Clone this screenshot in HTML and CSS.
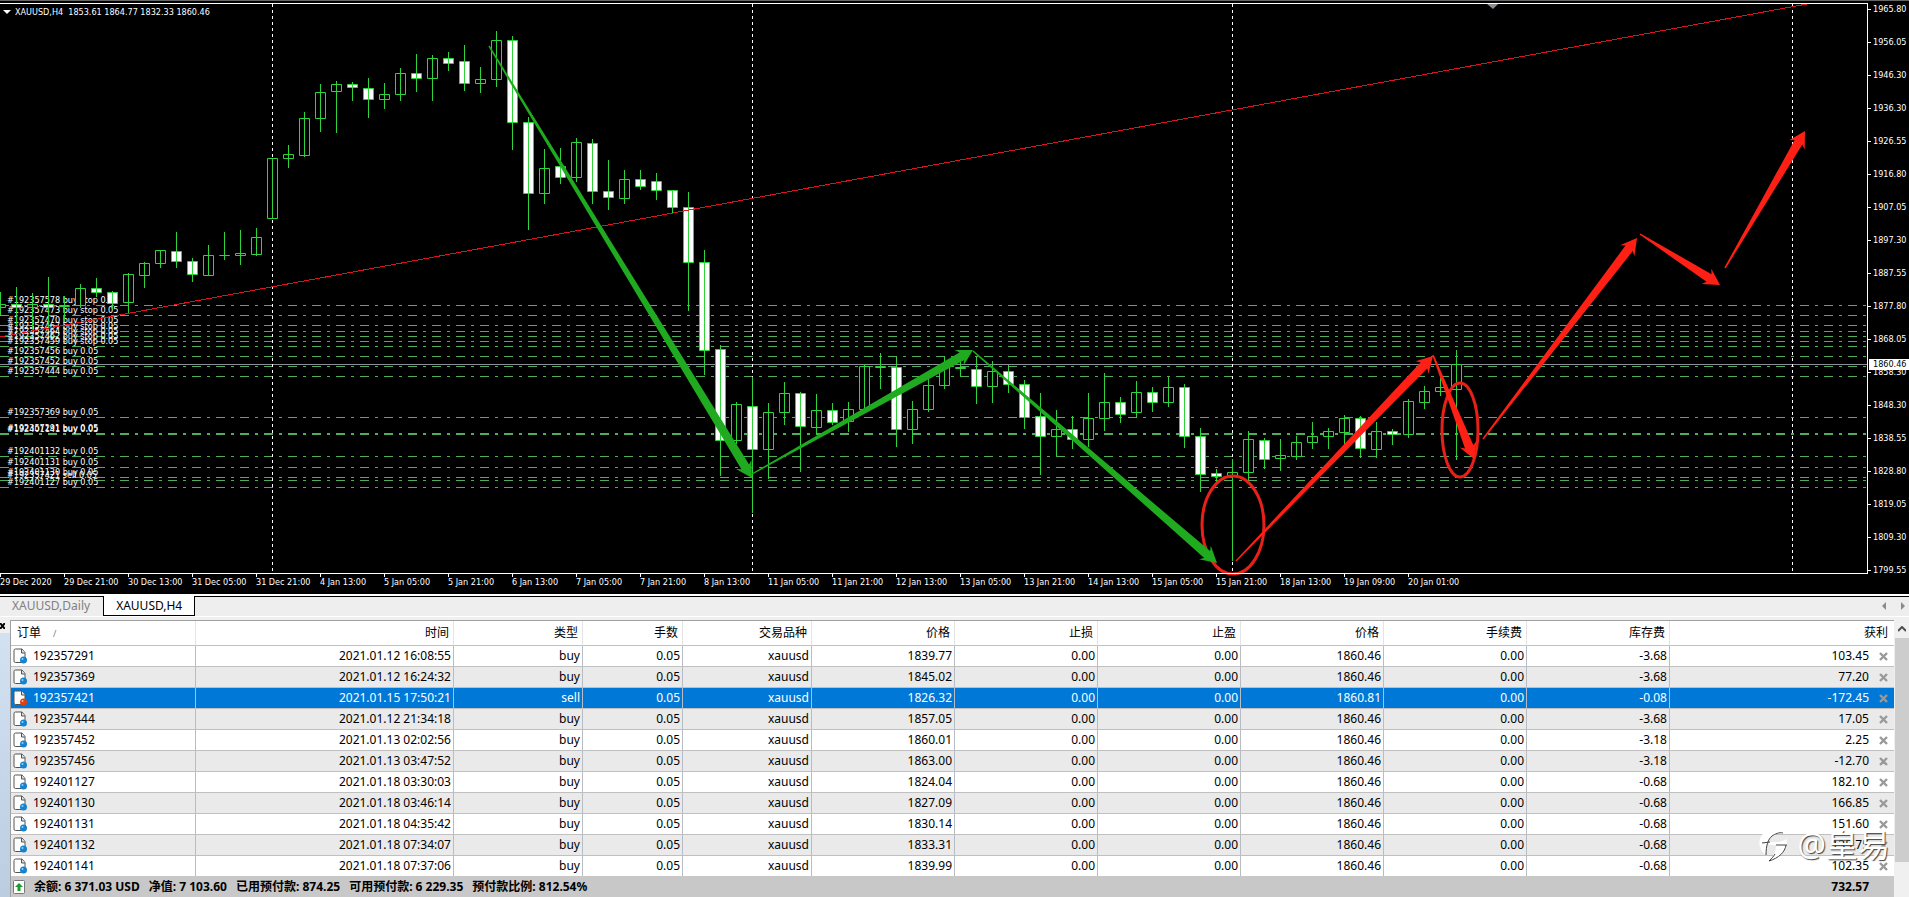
FILE: index.html
```html
<!DOCTYPE html>
<html lang="zh-CN">
<head>
    <meta charset="utf-8">
    <meta name="viewport" content="width=device-width, initial-scale=1">
    <link rel="stylesheet" href="styles.css">
    <title>XAUUSD,H4</title>
</head>
<body>

<svg class="sprite" aria-hidden="true">
    <symbol id="icoOrder" viewBox="0 0 14 16">
        <path d="M1 2.500Q1 1 2.500 1H9L12 4.500V14.500H2.500Q1 14.500 1 13Z" fill="#fff" stroke="#555"/>
        <path d="M8.500 1V5H12" fill="#ddd" stroke="#555"/>
        <circle cx="10.500" cy="12" r="3.500" fill="currentColor"/>
        <circle cx="9.500" cy="11" r="1" fill="#fff" fill-opacity=".6"/>
    </symbol>
    <symbol id="icoClose" viewBox="0 0 9 9">
        <path d="M1 1L8 8M8 1L1 8" stroke="currentColor" stroke-width="2.400"/>
    </symbol>
</svg>

<main class="chart">
    <svg class="plot" id="plot" role="img" aria-label="XAUUSD H4"></svg>
    <div class="prices">
        <ul id="prices"></ul>
        <span class="price-low">1858.30</span>
        <span class="price-now">1860.46</span>
    </div>
    <ul class="dates" id="dates"></ul>
</main>

<nav class="tabs">
    <button class="tab">XAUUSD,Daily</button>
    <button class="tab active">XAUUSD,H4</button>
    <div class="tab-scroll">
        <button aria-label="prev"><svg width="5" height="8"><path d="M4 0V8L0 4Z"/></svg></button>
        <button aria-label="next"><svg width="5" height="8"><path d="M0 0V8L4 4Z"/></svg></button>
    </div>
</nav>

<section class="terminal">
    <aside class="side">
        <button aria-label="close"><svg width="5" height="6"><path d="M0 0L5 6M5 0L0 6"/></svg></button>
    </aside>
    <div class="orders">
        <table>
            <colgroup>
                <col class="c-order"><col class="c-time"><col class="c-type"><col class="c-lots"><col class="c-symbol">
                <col class="c-num"><col class="c-num"><col class="c-num"><col class="c-num"><col class="c-num"><col class="c-num">
                <col>
            </colgroup>
            <thead>
            <tr>
                <th>订单<span class="sort">/</span></th>
                <th>时间</th>
                <th>类型</th>
                <th>手数</th>
                <th>交易品种</th>
                <th>价格</th>
                <th>止损</th>
                <th>止盈</th>
                <th>价格</th>
                <th>手续费</th>
                <th>库存费</th>
                <th>获利</th>
            </tr>
            </thead>
            <tbody id="rows"></tbody>
        </table>
        <footer class="summary">
            <svg width="12" height="14"><rect x=".5" y=".5" width="11" height="13" rx="1" fill="#fff" stroke="#777"/><path d="M6 3L10 7H7.500V11H4.500V7H2Z" fill="#1f9a2f"/></svg>
            <span>余额: 6 371.03 USD</span>
            <span>净值: 7 103.60</span>
            <span>已用预付款: 874.25</span>
            <span>可用预付款: 6 229.35</span>
            <span>预付款比例: 812.54%</span>
            <span class="total">732.57</span>
        </footer>
        <div class="mark">
            <svg width="32" height="34" viewBox="0 0 32 34">
                <path d="M20 1C8 0 0 9 3 19C4 23 6 25 9 27C9 20 10 13 14 9C17 6 21 5 26 5Z" fill="#fff"/>
                <path d="M30 11C31 22 24 29 12 33C17 28 19 24 19 17H12V14H20C23 14 26 13 30 11Z" fill="#fff"/>
                <path d="M5 15L13 14M9 27C9 18 11 11 15 8C18 6 22 4 26 5M19 17H30M29 17C28 24 22 30 12 33C15 30 17 28 18 26" fill="none" stroke="#444" stroke-width="1"/>
            </svg>
            <span>@皇易</span>
        </div>
    </div>
    <div class="scroll">
        <button aria-label="up"><svg width="8" height="6"><path d="M0 5L4 1L8 5"/></svg></button>
        <div class="thumb"></div>
    </div>
</section>

<script src="script.js"></script>
</body>
</html>
```
FILE: styles.css
```css
html, body { height: 100%; margin: 0; padding: 0; }
body { display: flex; flex-direction: column; overflow: hidden; background: #f0f0f0; color: #000; font: 12px/20px "Noto Sans", "Noto Sans CJK SC", sans-serif; }
ul { list-style: none; margin: 0; padding: 0; }
button { border: 0; padding: 0; background: none; font: inherit; color: inherit; }
svg { display: block; }
.sprite { position: absolute; width: 0; height: 0; }

/* Chart */
.chart { display: grid; grid-template-columns: 1fr 42px; grid-template-rows: 573px 21px; flex: none; background: #000 linear-gradient(#666, #666) no-repeat 0 0 / 100% 1px; color: #fff; font: 9px/11px "DejaVu Sans Condensed", "DejaVu Sans", sans-serif; }
.plot { width: 100%; height: 573px; overflow: visible; }
.plot text { fill: #fff; white-space: pre; }
.level { stroke: #4fae5a; stroke-dasharray: 9 6 3 6; }
.bid { stroke: #8c8c9c; }
.separator { stroke: #fff; stroke-dasharray: 3 3; }
.frame { stroke: #fff; }
.candle { stroke: #2fd43a; fill: #000; }
.candle.down { fill: #fff; }
.trend { stroke: #dc1420; shape-rendering: crispEdges; }
.arrow-green { fill: #1faa1f; }
.arrow-red { fill: #ff2015; }
.ring { fill: none; stroke: #e8201a; stroke-width: 3; }
.shift { fill: #8c8c94; }
.marker { fill: #fff; }

.prices { position: relative; margin: 3px 0 -1px; border-left: 1px solid #fff; }
.prices ul { display: flex; flex-direction: column; gap: 22px; padding-top: 1px; }
.prices li { display: flex; align-items: center; }
.prices li::before { content: ""; width: 3px; height: 1px; margin-right: 2px; background: #fff; }
.price-now, .price-low { position: absolute; left: 1px; right: 0; padding-left: 4px; }
.price-now { top: 356px; background: #fff; color: #000; }
.price-low { top: 364px; }
.dates { display: flex; border-top: 1px solid #fff; overflow: hidden; }
.dates li { flex: none; width: 64px; white-space: nowrap; }
.dates li::before { content: ""; display: block; width: 1px; height: 3px; background: #fff; }

/* Chart tabs */
.tabs { display: flex; flex: none; height: 20px; margin-top: 2px; border-bottom: 1px solid #fff; background: #eee; box-shadow: 0 -2px #fff, inset 0 1px #000; font-size: 12px; line-height: 20px; }
.tab { padding: 0 13px 0 12px; color: #808080; }
.tab.active { padding: 0 12px; border: 1px solid #000; border-top: 0; background: #fff; color: #000; }
.tab-scroll { display: flex; align-items: center; gap: 14px; margin-left: auto; padding-right: 3px; }
.tab-scroll path { fill: #8a8a8a; }

/* Terminal */
.terminal { display: flex; flex: 1; min-height: 0; margin-top: 3px; }
.side { width: 10px; flex: none; background: linear-gradient(#f0f0f0 13px, #d3e2f2 13px, #bccde2); }
.side button { display: block; padding-top: 3px; }
.side path { stroke: #000; stroke-width: 2; }
.orders { position: relative; flex: 1; min-width: 0; border: solid #a0a0a0; border-width: 1px 0 0 1px; background: #fff; }
table { width: 100%; table-layout: fixed; border-collapse: separate; border-spacing: 0; }
.c-order { width: 185px; }
.c-time { width: 258px; }
.c-type, .c-symbol { width: 129px; }
.c-lots { width: 100px; }
.c-num { width: 143px; }
th, td { box-sizing: border-box; padding: 0 2px; border-right: 1px solid #b8bcc4; border-bottom: 1px solid #c0c0c0; text-align: right; white-space: nowrap; overflow: hidden; }
th { height: 25px; padding: 0 4px 0 6px; border-right-color: #e4e4e4; font-weight: normal; }
td { height: 21px; }
th:first-child { text-align: left; }
th:last-child, td:last-child { border-right: 0; }
th:last-child { padding-right: 6px; }
tbody tr:nth-child(even) { background: #eaeaea; }
tbody tr.selected { background: #0078d7; color: #fff; }
tbody tr:last-child td { height: 20px; border-bottom: 0; }
.sort { margin-left: 12px; color: #808080; font-size: 9px; }
.order, .profit { display: flex; align-items: center; }
.order { gap: 6px; }
.order svg { width: 14px; height: 16px; color: #1583d0; }
.selected .order svg { color: #e04010; }
.profit { justify-content: flex-end; gap: 10px; padding-right: 4px; }
.profit svg { width: 9px; height: 9px; color: #999; }
.summary { display: flex; align-items: center; gap: 9px; padding: 0 25px 0 2px; background: #c8c8c8; font-weight: bold; line-height: 21px; white-space: nowrap; }
.summary .total { margin-left: auto; }
.mark { position: absolute; right: 4px; bottom: 31px; display: flex; align-items: center; gap: 8px; color: #fff; font-size: 32px; line-height: 42px; text-shadow: 1px 1px 1px #444; }

.scroll { width: 14px; flex: none; margin-left: 1px; background: #f0f0f0; }
.scroll button { display: flex; align-items: center; justify-content: center; width: 100%; height: 18px; }
.scroll path { fill: none; stroke: #505050; stroke-width: 2; }
.thumb { height: 81%; background: #cdcdcd; }
```
FILE: script.js
```js
const STEP = 16;

// [high, body top, body bottom, low, down]
const candles = [
    [292, 304, 307, 315, 0], [287, 304, 307, 325, 1], [293, 304, 307, 328, 0], [277, 304, 307, 327, 1],
    [296, 305, 306, 320, 0], [284, 288, 305, 307, 0], [278, 288, 292, 296, 1], [291, 292, 303, 308, 1],
    [273, 274, 302, 312, 0], [262, 263, 275, 287, 0], [250, 250, 263, 267, 0], [232, 251, 261, 267, 1],
    [258, 261, 274, 281, 1], [245, 255, 275, 275, 0], [232, 255, 255, 259, 0], [230, 253, 255, 264, 0],
    [228, 237, 254, 255, 0], [158, 158, 218, 218, 0], [145, 154, 158, 167, 0], [112, 118, 155, 156, 0],
    [84, 92, 118, 131, 0], [81, 84, 91, 132, 0], [82, 84, 87, 100, 1], [78, 88, 99, 117, 1],
    [83, 94, 99, 108, 0], [68, 73, 94, 100, 0], [54, 73, 78, 91, 1], [55, 58, 78, 100, 0],
    [52, 58, 63, 70, 1], [45, 61, 83, 90, 1], [67, 79, 83, 92, 0], [31, 40, 79, 86, 0],
    [36, 40, 122, 149, 1], [117, 122, 193, 229, 1], [149, 168, 193, 203, 0], [148, 166, 177, 183, 1],
    [138, 142, 177, 181, 0], [139, 143, 191, 203, 1], [160, 191, 197, 209, 1], [170, 179, 198, 203, 0],
    [170, 179, 186, 189, 1], [173, 181, 190, 199, 1], [190, 190, 207, 212, 1], [192, 207, 262, 310, 1],
    [250, 262, 350, 374, 1], [345, 349, 440, 475, 1], [402, 404, 440, 443, 0], [377, 406, 449, 512, 1],
    [403, 412, 449, 478, 0], [382, 393, 412, 424, 0], [392, 393, 426, 471, 1], [394, 410, 427, 434, 0],
    [403, 410, 422, 424, 1], [402, 409, 421, 431, 0], [364, 366, 409, 409, 0], [353, 366, 367, 388, 0],
    [357, 367, 429, 446, 1], [401, 409, 429, 443, 0], [378, 385, 409, 411, 0], [356, 366, 385, 388, 0],
    [360, 367, 368, 376, 0], [357, 369, 386, 403, 1], [361, 371, 386, 402, 0], [365, 371, 384, 392, 1],
    [380, 384, 417, 428, 1], [393, 416, 436, 474, 1], [410, 429, 436, 455, 0], [416, 429, 439, 448, 1],
    [393, 418, 439, 446, 0], [373, 402, 418, 430, 0], [397, 402, 414, 422, 1], [381, 392, 412, 417, 0],
    [387, 392, 402, 411, 1], [377, 387, 402, 406, 0], [384, 387, 436, 447, 1], [428, 436, 474, 491, 1],
    [469, 473, 476, 481, 1], [459, 472, 475, 560, 0], [431, 439, 472, 481, 0], [438, 440, 459, 468, 1],
    [439, 455, 458, 470, 0], [436, 442, 456, 459, 0], [422, 436, 442, 448, 0], [428, 431, 436, 448, 0],
    [415, 418, 432, 446, 0], [416, 418, 448, 457, 1], [422, 431, 449, 457, 0], [429, 431, 434, 444, 1],
    [399, 401, 434, 437, 0], [386, 391, 402, 408, 0], [378, 387, 391, 395, 0], [350, 364, 389, 459, 0]
];

const levels = [
    [305, "#192357578 buy stop 0.05"],
    [315, "#192357473 buy stop 0.05"],
    [325, "#192357470 buy stop 0.05"],
    [331, "#192357467 buy stop 0.05"],
    [336, "#192357464 buy stop 0.05"],
    [341, "#192357462 buy stop 0.05"],
    [346, "#192357459 buy stop 0.05"],
    [356, "#192357456 buy 0.05"],
    [366, "#192357452 buy 0.05"],
    [376, "#192357444 buy 0.05"],
    [417, "#192357369 buy 0.05"],
    [433, "#192357291 buy 0.05"],
    [434, "#192401141 buy 0.05"],
    [456, "#192401132 buy 0.05"],
    [467, "#192401131 buy 0.05"],
    [477, "#192401130 buy 0.05"],
    [480, "#192357421 sell 0.05"],
    [487, "#192401127 buy 0.05"]
];

const arrows = [
    ["green", 489, 46, 752, 478],
    ["green", 752, 474, 973, 350],
    ["green", 973, 351, 1217, 563],
    ["red", 1236, 561, 1433, 356],
    ["red", 1433, 355, 1474, 459],
    ["red", 1483, 439, 1637, 238],
    ["red", 1640, 234, 1720, 285],
    ["red", 1725, 268, 1805, 131]
];

const dates = ["29 Dec 2020", "29 Dec 21:00", "30 Dec 13:00", "31 Dec 05:00", "31 Dec 21:00", "4 Jan 13:00", "5 Jan 05:00",
    "5 Jan 21:00", "6 Jan 13:00", "7 Jan 05:00", "7 Jan 21:00", "8 Jan 13:00", "11 Jan 05:00", "11 Jan 21:00", "12 Jan 13:00",
    "13 Jan 05:00", "13 Jan 21:00", "14 Jan 13:00", "15 Jan 05:00", "15 Jan 21:00", "18 Jan 13:00", "19 Jan 09:00", "20 Jan 01:00"];

const prices = ["1965.80", "1956.05", "1946.30", "1936.30", "1926.55", "1916.80", "1907.05", "1897.30", "1887.55", "1877.80",
    "1868.05", "", "1848.30", "1838.55", "1828.80", "1819.05", "1809.30", "1799.55"];

// order, time, type, open price, current price, swap, profit
const orders = [
    ["192357291", "2021.01.12 16:08:55", "buy", "1839.77", "1860.46", "-3.68", "103.45"],
    ["192357369", "2021.01.12 16:24:32", "buy", "1845.02", "1860.46", "-3.68", "77.20"],
    ["192357421", "2021.01.15 17:50:21", "sell", "1826.32", "1860.81", "-0.08", "-172.45"],
    ["192357444", "2021.01.12 21:34:18", "buy", "1857.05", "1860.46", "-3.68", "17.05"],
    ["192357452", "2021.01.13 02:02:56", "buy", "1860.01", "1860.46", "-3.18", "2.25"],
    ["192357456", "2021.01.13 03:47:52", "buy", "1863.00", "1860.46", "-3.18", "-12.70"],
    ["192401127", "2021.01.18 03:30:03", "buy", "1824.04", "1860.46", "-0.68", "182.10"],
    ["192401130", "2021.01.18 03:46:14", "buy", "1827.09", "1860.46", "-0.68", "166.85"],
    ["192401131", "2021.01.18 04:35:42", "buy", "1830.14", "1860.46", "-0.68", "151.60"],
    ["192401132", "2021.01.18 07:34:07", "buy", "1833.31", "1860.46", "-0.68", "135.75"],
    ["192401141", "2021.01.18 07:37:06", "buy", "1839.99", "1860.46", "-0.68", "102.35"]
];

/**
 * Chart
 */

let svg = "";

for (const [y] of levels) svg += hline("level", y);
svg += hline("bid", 364) + hline("frame", 3);
for (const x of [272, 752, 1232, 1792]) {
    svg += `<line class="separator" x1="${x + .5}" y1="4" x2="${x + .5}" y2="573"/>`;
}
for (const [y, label] of levels) svg += `<text x="7" y="${y - 2}">${label}</text>`;

candles.forEach(([high, top, bottom, low, down], i) => {
    const x = i * STEP + .5;
    svg += `<path class="candle${down ? " down" : ""}" d="M${x} ${high}V${low + 1}M${x - 5} ${top + .5}h10V${bottom + .5}h-10Z"/>`;
});

svg += `<line class="trend" x1="0" y1="337" x2="1807" y2="4"/>`;
svg += `<ellipse class="ring" cx="1233" cy="525" rx="31" ry="49"/>`;
svg += `<ellipse class="ring" cx="1460" cy="430" rx="18" ry="47"/>`;
for (const a of arrows) svg += arrow(...a);
svg += `<path class="shift" d="M1487 4h11l-5 5Z"/>`;
svg += `<path class="marker" d="M3 10h8l-4 4Z"/>`;
svg += `<text x="15" y="15">XAUUSD,H4  1853.61 1864.77 1832.33 1860.46</text>`;
$("plot").innerHTML = svg;

$("dates").innerHTML = dates.map(d => `<li>${d}</li>`).join("");
$("prices").innerHTML = prices.map(p => `<li>${p || "&nbsp;"}</li>`).join("");

/**
 * Orders
 */

$("rows").innerHTML = orders.map(([id, time, type, open, price, swap, profit]) => `
    <tr${type === "sell" ? ' class="selected"' : ""}>
        <td><div class="order"><svg><use href="#icoOrder"/></svg>${id}</div></td>
        <td>${time}</td><td>${type}</td><td>0.05</td><td>xauusd</td><td>${open}</td>
        <td>0.00</td><td>0.00</td><td>${price}</td><td>0.00</td><td>${swap}</td>
        <td><div class="profit">${profit}<button aria-label="close"><svg><use href="#icoClose"/></svg></button></div></td>
    </tr>`).join("");

/**
 * Helpers
 */

function $(id) {
    return document.getElementById(id);
}

function hline(cls, y) {
    return `<line class="${cls}" x1="0" y1="${y + .5}" x2="100%" y2="${y + .5}"/>`;
}

// Tapered arrow: thin at the tail, barbed head at the tip
function arrow(color, x1, y1, x2, y2) {
    const len = Math.hypot(x2 - x1, y2 - y1);
    const ux = (x2 - x1) / len, uy = (y2 - y1) / len;
    const at = (d, side) => `${(x1 + ux * d - uy * side).toFixed(1)},${(y1 + uy * d + ux * side).toFixed(1)}`;
    const points = [at(0, -.7), at(len - 13, -4.5), at(len - 16, -9), at(len, 0), at(len - 16, 9), at(len - 13, 4.5), at(0, .7)];
    return `<polygon class="arrow-${color}" points="${points.join(" ")}"/>`;
}
```
